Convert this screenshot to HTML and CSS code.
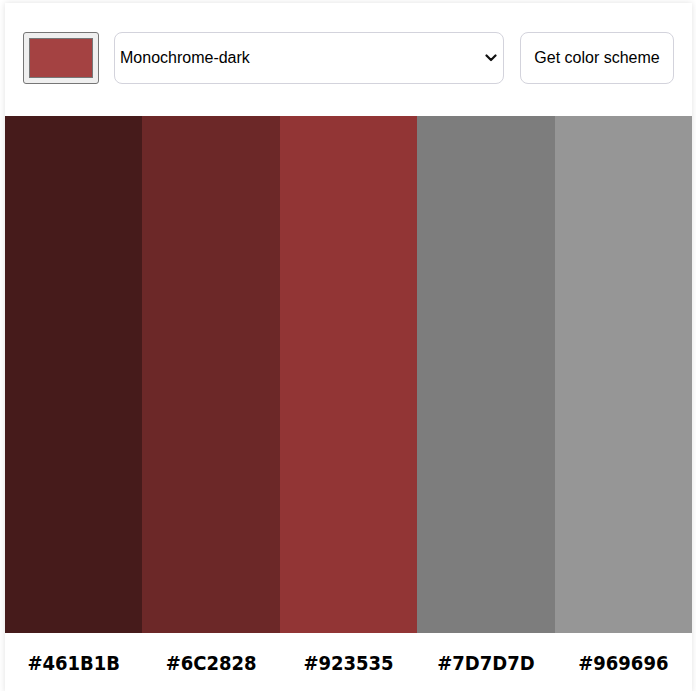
FILE: index.html
```html
<!DOCTYPE html>
<html>
<head>
<meta charset="utf-8">
<link rel="stylesheet" href="styles.css">
</head>
<body>
<main class="card">
  <header class="controls">
    <div class="color-input"><span class="color-swatch"></span></div>
    <div class="select">
      <span class="select-text">Monochrome-dark</span>
      <svg class="chevron" width="12" height="8" viewBox="0 0 12 8"><path d="M1.5 1.5 L6 6 L10.5 1.5" fill="none" stroke="#111" stroke-width="2.2" stroke-linecap="round" stroke-linejoin="round"/></svg>
    </div>
    <div class="button">Get color scheme</div>
  </header>
  <section class="palette">
    <div class="col"><div class="swatch" style="background:#461B1B"></div><div class="hex">#461B1B</div></div>
    <div class="col"><div class="swatch" style="background:#6C2828"></div><div class="hex">#6C2828</div></div>
    <div class="col"><div class="swatch" style="background:#923535"></div><div class="hex">#923535</div></div>
    <div class="col"><div class="swatch" style="background:#7D7D7D"></div><div class="hex">#7D7D7D</div></div>
    <div class="col"><div class="swatch" style="background:#969696"></div><div class="hex">#969696</div></div>
  </section>
</main>
</body>
</html>
```
FILE: styles.css
```css
html, body {
  margin: 0;
  padding: 0;
  background: #ffffff;
}
body {
  padding: 3px 4px 0 5px;
  font-family: "Liberation Sans", Arial, sans-serif;
  overflow: hidden;
}
.card {
  background: #fff;
  box-shadow: 0 0 6px rgba(0, 0, 0, 0.12);
}
.controls {
  display: flex;
  align-items: center;
  padding: 29px 18px 32px 18px;
}
.color-input {
  width: 76px;
  height: 52px;
  box-sizing: border-box;
  background: #efefef;
  border: 1px solid #767676;
  border-radius: 3px;
  padding: 5px;
  display: flex;
  margin-right: 15px;
}
.color-swatch {
  flex: 1;
  background: #a44242;
  border: 1px solid #777;
}
.select {
  flex: 1;
  height: 52px;
  box-sizing: border-box;
  border: 1px solid #d3d3dc;
  border-radius: 8px;
  display: flex;
  align-items: center;
  padding: 0 6px 0 5px;
  font-size: 16px;
  color: #000;
  margin-right: 16px;
}
.select-text {
  flex: 1;
}
.chevron {
  display: block;
}
.button {
  width: 154px;
  height: 52px;
  box-sizing: border-box;
  border: 1px solid #d3d3dc;
  border-radius: 8px;
  display: flex;
  align-items: center;
  justify-content: center;
  font-size: 16px;
  color: #000;
}
.palette {
  display: flex;
}
.col {
  flex: 1;
  display: flex;
  flex-direction: column;
}
.swatch {
  height: 517px;
}
.hex {
  height: 60px;
  display: flex;
  align-items: center;
  justify-content: center;
  font-family: "DejaVu Sans Condensed", "DejaVu Sans", sans-serif;
  font-stretch: condensed;
  font-weight: bold;
  font-size: 20px;
  color: #000;
}
```
